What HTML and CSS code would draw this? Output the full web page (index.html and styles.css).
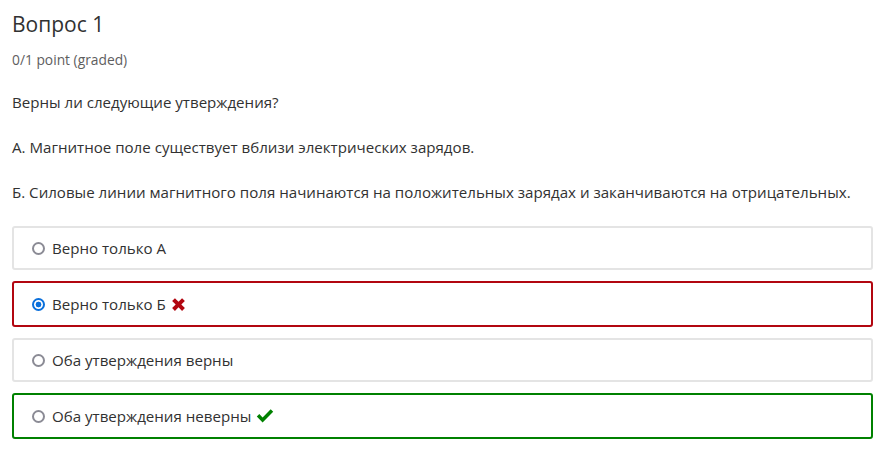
FILE: index.html
```html
<!DOCTYPE html>
<html lang="ru">
<head>
  <meta charset="UTF-8" />
  <title>Вопрос 1</title>
  <link rel="stylesheet" href="styles.css">
</head>

<body>
  <div class="problem">
    <h3 class="problem-title">Вопрос 1</h3>
    <div class="problem-progress">0/1 point (graded)</div>

    <div class="problem-text">
      <p>Верны ли следующие утверждения?</p>
      <p>А. Магнитное поле существует вблизи электрических зарядов.</p>
      <p>Б. Силовые линии магнитного поля начинаются на положительных зарядах и заканчиваются на отрицательных.</p>
    </div>

    <div class="choices">
      <label class="choice">
        <span class="radio"></span>
        <span class="choice-text">Верно только А</span>
      </label>

      <label class="choice incorrect">
        <span class="radio checked"></span>
        <span class="choice-text">Верно только Б</span>
        <svg class="status-icon" width="15" height="15" viewBox="0 0 16 16">
          <path d="M1.2 4.2 L4.2 1.2 L8 5 L11.8 1.2 L14.8 4.2 L11 8 L14.8 11.8 L11.8 14.8 L8 11 L4.2 14.8 L1.2 11.8 L5 8 Z" fill="#b20610"/>
        </svg>
      </label>

      <label class="choice">
        <span class="radio"></span>
        <span class="choice-text">Оба утверждения верны</span>
      </label>

      <label class="choice correct">
        <span class="radio"></span>
        <span class="choice-text">Оба утверждения неверны</span>
        <svg class="status-icon" width="18" height="15" viewBox="0 0 18 15">
          <path d="M0.8 7.6 L3.3 5.1 L6.6 8.4 L14.7 0.3 L17.2 2.8 L6.6 13.4 Z" fill="#008100"/>
        </svg>
      </label>
    </div>
  </div>
</body>
</html>
```

FILE: styles.css
```css
body {
  margin: 0;
  font-family: 'Open Sans', 'Noto Sans', sans-serif;
  color: #313131;
  background: #fff;
}

.problem {
  padding: 9px 5px 0 12px;
}

.problem-title {
  margin: 0;
  font-size: 21px;
  font-weight: 400;
  line-height: 30px;
  color: #313131;
}

.problem-progress {
  margin-top: 13px;
  font-size: 13.8px;
  line-height: 16px;
  color: #5e5e5e;
}

.problem-text {
  margin-top: 23px;
  font-size: 15.1px;
  line-height: 22px;
}

.problem-text p {
  margin: 0 0 23px;
}

.problem-text p:last-child {
  margin-bottom: 0;
}

.choices {
  margin-top: 23px;
  display: flex;
  flex-direction: column;
  gap: 11px;
}

.choice {
  display: flex;
  align-items: center;
  border: 2px solid #e4e4e4;
  border-radius: 3px;
  padding: 10px 14px 10px 18px;
  font-size: 15.1px;
  line-height: 20px;
}

.choice.incorrect {
  border-color: #b20610;
  padding: 11px 14px 11px 18px;
}

.choice.correct {
  border-color: #008100;
  padding: 11px 14px 11px 18px;
}

.radio {
  width: 9px;
  height: 9px;
  border: 2px solid #8b8b95;
  border-radius: 50%;
  margin-right: 7px;
  flex-shrink: 0;
}

.radio.checked {
  border-color: #0a6fdb;
  background: radial-gradient(circle, #0a6fdb 0 2.6px, #fff 3.2px);
}

.status-icon {
  margin-left: 5px;
}
```
